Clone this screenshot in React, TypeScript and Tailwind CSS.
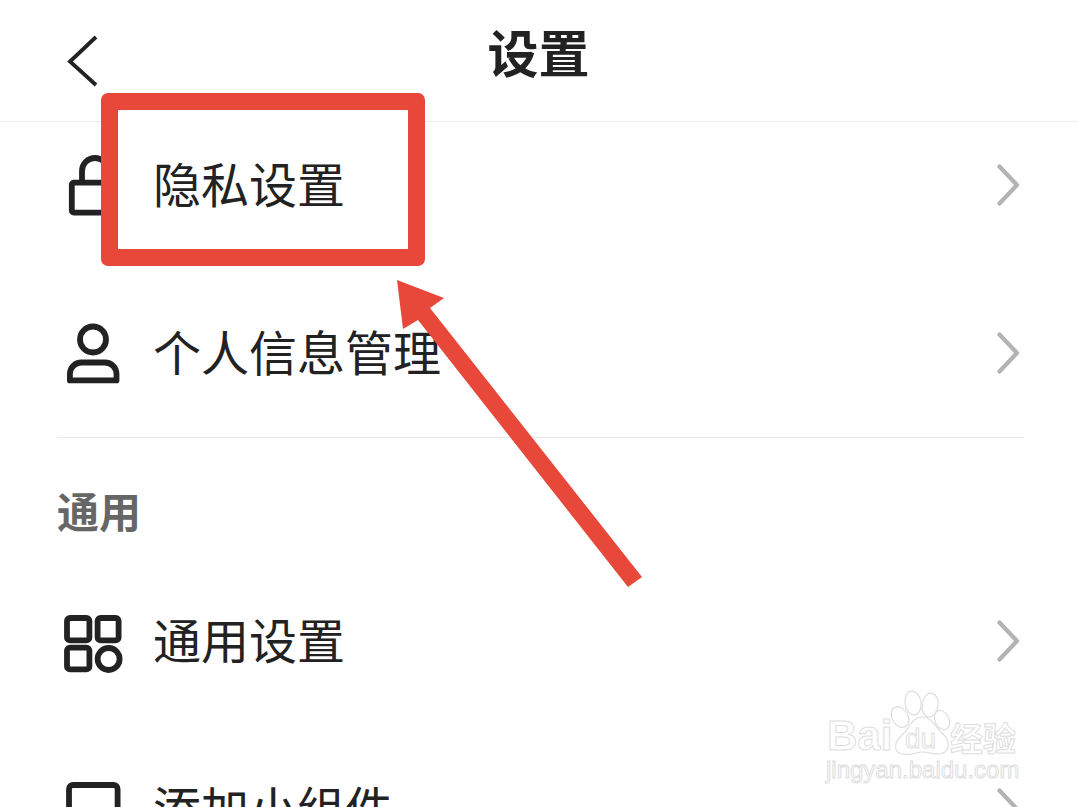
import React from "react";

const FONT = { fontFamily: '"Noto Sans CJK SC", "Noto Sans", sans-serif' };

function Chevron() {
  return (
    <svg width="26" height="44" viewBox="0 0 26 44" fill="none" className="shrink-0">
      <path d="M3.5 3.5 L21 22 L3.5 40.5" stroke="#b3b3b3" strokeWidth="4.2" strokeLinecap="round" strokeLinejoin="round" />
    </svg>
  );
}

function Icon({ children }: { children: React.ReactNode }) {
  return (
    <svg width="64" height="64" viewBox="0 0 64 64" fill="none" stroke="#222222" strokeWidth="5.8" strokeLinejoin="round" className="shrink-0">
      {children}
    </svg>
  );
}

function Row({ icon, label, raised }: { icon: React.ReactNode; label: string; raised?: boolean }) {
  return (
    <div className="flex h-[126px] shrink-0 items-center pl-[60px] pr-[55px]">
      <div className="w-[93px] shrink-0">{icon}</div>
      <span className={`mb-[7px] flex-1 text-[48px] leading-[60px] text-[#222222] ${raised ? "relative z-20" : ""}`}>{label}</span>
      <Chevron />
    </div>
  );
}

export default function App() {
  return (
    <div className="relative h-[807px] w-[1077px] overflow-hidden bg-white" style={FONT}>
      <header className="relative flex h-[122px] items-start justify-center border-b border-[#ececec] pt-[21px]">
        <svg width="34" height="54" viewBox="0 0 34 54" fill="none" className="absolute left-[65px] top-[34px]">
          <path d="M31 3 L5 27.5 L31 51" stroke="#222222" strokeWidth="3.8" strokeLinejoin="miter" />
        </svg>
        <h1 className="text-[51px] font-bold leading-[60px] text-[#222222]">设置</h1>
      </header>

      <div className="flex flex-col gap-[42px]">
        <Row
          raised
          label="隐私设置"
          icon={
            <Icon>
              <rect x="11.8" y="29.6" width="44" height="30" rx="2" />
              <path d="M22 29 V18 a13 13 0 0 1 26 0 V29" />
            </Icon>
          }
        />
        <Row
          label="个人信息管理"
          icon={
            <Icon>
              <circle cx="33" cy="18.5" r="13" />
              <path d="M9.9 59.4 V53 a11.5 11.5 0 0 1 11.5 -11.5 h23.6 a11.5 11.5 0 0 1 11.5 11.5 V59.4 Z" />
            </Icon>
          }
        />
      </div>

      <div className="mx-[57px] mt-[21px] mr-[53px] h-px bg-[#e9e9e9]" />

      <div className="h-[140px] pl-[57px] pt-[47px] text-[42px] font-bold leading-[50px] text-[#666666]">通用</div>

      <div className="flex flex-col gap-[42px]">
        <Row
          label="通用设置"
          icon={
            <Icon>
              <rect x="7" y="9" width="22.4" height="22.4" rx="3" />
              <rect x="37.6" y="9" width="21" height="22.4" rx="3" />
              <rect x="7" y="38.6" width="22.4" height="21.8" rx="3" />
              <circle cx="48.6" cy="50" r="11" />
            </Icon>
          }
        />
        <Row
          label="添加小组件"
          icon={
            <Icon>
              <rect x="9" y="8" width="48.6" height="26" rx="4" />
            </Icon>
          }
        />
      </div>

      {/* Red annotation box */}
      <div className="absolute left-[101px] top-[93px] z-10 h-[173px] w-[324px] rounded-[7px] border-[17px] border-[#e8483a] bg-white" />

      {/* Red annotation arrow */}
      <svg className="absolute left-0 top-0 z-20" width="1077" height="807" viewBox="0 0 1077 807" fill="#e8483a">
        <polygon points="397,280 444,298 430,308 642,577 628,587 418,320 403,329" />
      </svg>

      {/* Watermark */}
      <div className="absolute left-[826px] top-[690px] z-30 h-[96px] w-[194px] text-transparent [-webkit-text-stroke:1px_#dedede]">
        <svg width="194" height="70" viewBox="0 0 194 70" fill="#ffffff" stroke="#dedede" strokeWidth="1.2" className="absolute left-0 top-0">
          <ellipse cx="74" cy="27" rx="8" ry="11" transform="rotate(-30 74 27)" />
          <ellipse cx="87" cy="13" rx="8" ry="12" transform="rotate(-8 87 13)" />
          <ellipse cx="104" cy="15" rx="8" ry="12" transform="rotate(8 104 15)" />
          <ellipse cx="116" cy="30" rx="7" ry="10" transform="rotate(-25 116 30)" />
          <path d="M96 27 C 86 27 84 38 76 45 C 68 52 67 62 76 64 C 84 66 90 62 97 62 C 104 62 110 66 117 63 C 124 60 124 50 117 44 C 109 37 106 27 96 27 Z" />
        </svg>
        <span className="absolute left-[1px] top-[24px] text-[42px] font-bold leading-[44px]" style={{ fontFamily: '"Liberation Sans", sans-serif' }}>Bai</span>
        <span className="absolute left-[79px] top-[35px] text-[28px] leading-[28px]" style={{ fontFamily: '"Liberation Sans", sans-serif' }}>du</span>
        <span className="absolute left-[124px] top-[27px] text-[33px] font-bold leading-[40px]">经验</span>
        <span className="absolute left-0 top-[67px] text-[24px] leading-[26px]" style={{ fontFamily: '"Liberation Sans", sans-serif' }}>jingyan.baidu.com</span>
      </div>
    </div>
  );
}
